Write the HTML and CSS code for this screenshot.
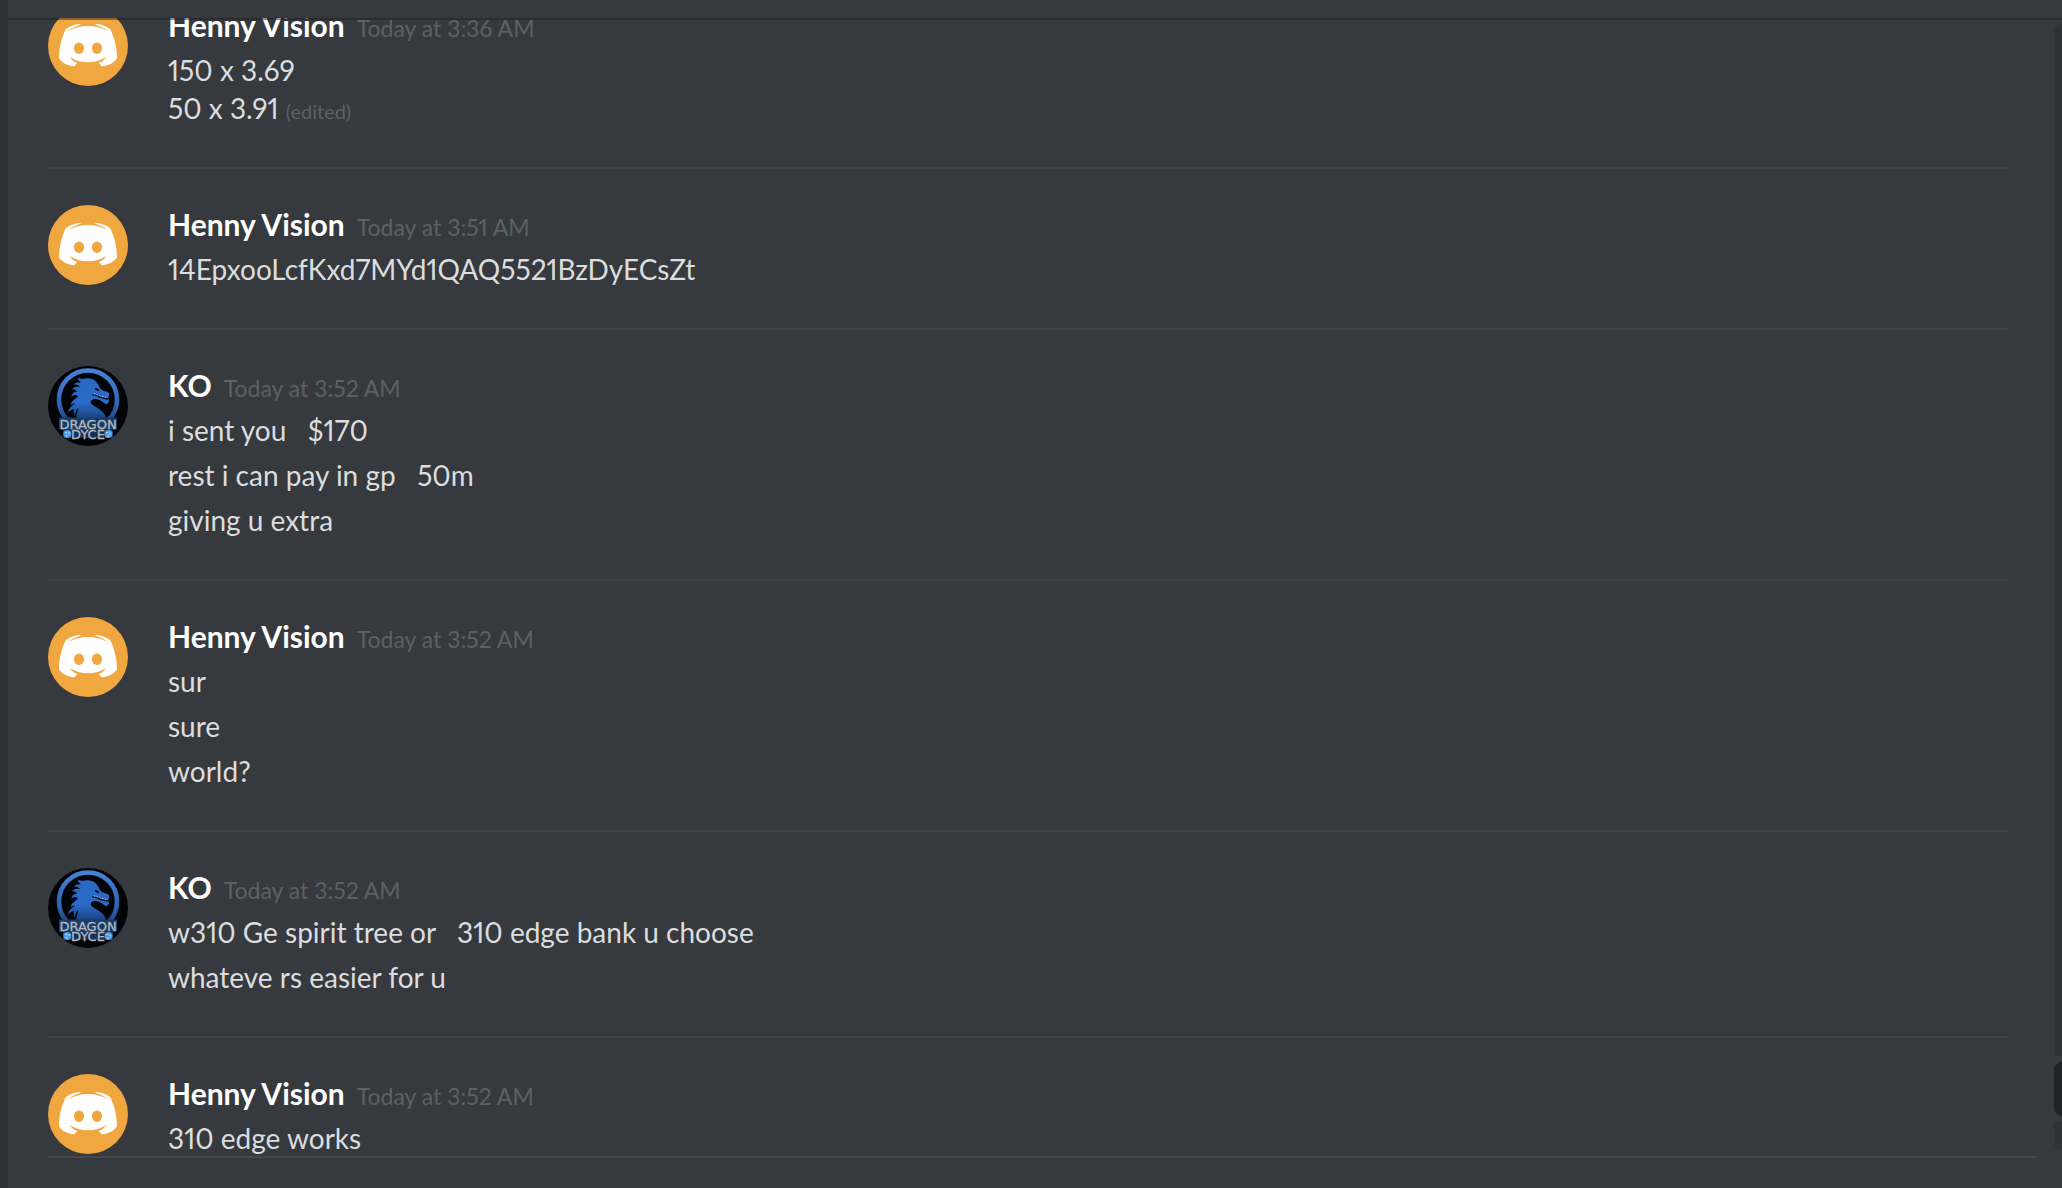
FILE: index.html
```html
<!DOCTYPE html>
<html lang="en">
<head>
<meta charset="utf-8">
<title>Direct messages</title>
<link rel="stylesheet" href="styles.css">
</head>
<body>
<svg class="symbols" aria-hidden="true">
  <defs>
    <linearGradient id="ring" x1="0" y1="0" x2="0" y2="1">
      <stop offset="0" stop-color="#4583d8"/>
      <stop offset="0.6" stop-color="#2f62ae"/>
      <stop offset="1" stop-color="#16345f"/>
    </linearGradient>
    <linearGradient id="scales" x1="0" y1="0" x2="0" y2="1">
      <stop offset="0" stop-color="#2a68c0"/>
      <stop offset="0.6" stop-color="#2b6cca"/>
      <stop offset="1" stop-color="#1a417c"/>
    </linearGradient>
    <symbol id="clyde" viewBox="0 0 80 80">
      <circle cx="40" cy="40" r="40" fill="#f0a740"/>
      <path fill="#fff" d="M33 18C27 18 22 20 17.7 23.3C13.5 32 11 42 11 52.3C14 57 20 60 26.3 60.3L29.3 57C26 56 23.5 54 22 51C27 54.5 33 56.3 40 56.3C47 56.3 53 54.5 58 51C56.5 54 54 56 50.7 57L53.7 60.3C60 60 66 57 69 52.3C69 42 66.5 32 62.3 23.3C58 20 53 18 47 18L48 19C53 20.5 57 22.5 59.5 25C53 21.5 47 20 40 20C33 20 27 21.5 20.5 25C23 22.5 27 20.5 32 19Z"/>
      <ellipse cx="31" cy="42.3" rx="5.1" ry="5.7" fill="#f0a740"/>
      <ellipse cx="49" cy="42.3" rx="5.1" ry="5.7" fill="#f0a740"/>
    </symbol>
    <symbol id="dragon" viewBox="0 0 80 80">
      <circle cx="40" cy="40" r="40" fill="#020407"/>
      <circle cx="40" cy="33.500" r="29" fill="none" stroke="url(#ring)" stroke-width="4.600"/>
      <path fill="url(#scales)" d="M29.500 11.500C34 14 37 11.500 42 12.500C47 13.500 49 16 51 20C52 22.500 53 23.500 56 25C59 25.500 61 26 61.500 28.500L60.500 31L61 36L58 38.500C55 36 52 33.500 48 33C44 33 42 35 43 37.500C46 41 54 43 57 49C58 51 57.500 52 57 53H29C27 50 30 47 30 42C28 44 27 47 27 50C25 47 25.500 45 26 43C23.500 43.500 22 44.500 20 46.500C20.500 42 24 40 27 37.500C25 37.500 24 38 22.500 39.500C23.500 34 28 33.500 30 30C27 28 25 29 23.500 31C24 27 26 26 29 25.500C27 23 25.500 23 24 23.500C26 20.500 29 21 32 20.500C29 18 27 18 26 19C27 15.500 31 17 33 16C31 15 30 13.500 29.500 11.500Z"/>
      <path fill="none" stroke="#020407" stroke-width="1.400" d="M44.500 29C48 28 50 31 53 31.500S58 33.500 60.500 32.500M47 22.500L51 24.500"/>
      <path fill="none" stroke="#b9cbe4" stroke-width="1" stroke-dasharray="1.300 1.500" d="M46 28C49 28 51 30 54 30.500S58 31.500 60 31"/>
      <rect x="11" y="51.500" width="58" height="12" fill="#183c69"/>
      <rect x="15" y="63" width="50" height="9" fill="#12315c"/>
      <text class="crest crest-top" x="40" y="62.500" text-anchor="middle">DRAGON</text>
      <text class="crest crest-bottom" x="40" y="72.500" text-anchor="middle">DYCE</text>
      <circle cx="19.300" cy="68" r="4" fill="#4b9be6"/>
      <circle cx="60.500" cy="68" r="4" fill="#4b9be6"/>
      <path stroke="#d6efff" stroke-width="1.400" stroke-linecap="round" d="M18 66.500h.1M21 67h.1M18.500 69.700h.1M59 66.500h.1M62 67.500h.1M60 70h.1"/>
    </symbol>
  </defs>
</svg>
<div class="app">
  <div class="sidebar-edge"></div>
  <main class="chat">
    <header class="topbar"></header>
    <div class="viewport">
      <div class="messages">
        <article class="group">
          <svg class="avatar"><use href="#clyde"/></svg>
          <div class="body">
            <h2 class="meta"><span class="name">Henny Vision</span><time class="time">Today at 3:36 AM</time></h2>
            <p class="text">150 x 3.69
50 x 3.91<span class="edited">(edited)</span></p>
          </div>
        </article>
        <article class="group">
          <svg class="avatar"><use href="#clyde"/></svg>
          <div class="body">
            <h2 class="meta"><span class="name">Henny Vision</span><time class="time">Today at 3:51 AM</time></h2>
            <p class="text">14EpxooLcfKxd7MYd1QAQ5521BzDyECsZt</p>
          </div>
        </article>
        <article class="group">
          <svg class="avatar"><use href="#dragon"/></svg>
          <div class="body">
            <h2 class="meta"><span class="name">KO</span><time class="time">Today at 3:52 AM</time></h2>
            <p class="text">i sent you   $170</p>
            <p class="text">rest i can pay in gp   50m</p>
            <p class="text">giving u extra</p>
          </div>
        </article>
        <article class="group">
          <svg class="avatar"><use href="#clyde"/></svg>
          <div class="body">
            <h2 class="meta"><span class="name">Henny Vision</span><time class="time">Today at 3:52 AM</time></h2>
            <p class="text">sur</p>
            <p class="text">sure</p>
            <p class="text">world?</p>
          </div>
        </article>
        <article class="group">
          <svg class="avatar"><use href="#dragon"/></svg>
          <div class="body">
            <h2 class="meta"><span class="name">KO</span><time class="time">Today at 3:52 AM</time></h2>
            <p class="text">w310 Ge spirit tree or   310 edge bank u choose</p>
            <p class="text">whateve rs easier for u</p>
          </div>
        </article>
        <article class="group">
          <svg class="avatar"><use href="#clyde"/></svg>
          <div class="body">
            <h2 class="meta"><span class="name">Henny Vision</span><time class="time">Today at 3:52 AM</time></h2>
            <p class="text">310 edge works</p>
          </div>
        </article>
      </div>
      <div class="scrollbar">
        <div class="track track-above"></div>
        <div class="thumb"></div>
        <div class="track track-below"></div>
      </div>
    </div>
    <footer class="composer"></footer>
  </main>
</div>
</body>
</html>
```
FILE: styles.css
```css
* {
  box-sizing: border-box;
}

body {
  margin: 0;
  background: #36393e;
  color: #dcddde;
  font-family: Lato, "Open Sans", sans-serif;
  font-variant-numeric: proportional-nums;
}

.symbols {
  position: absolute;
  width: 0;
  height: 0;
}

.app {
  display: flex;
  height: 100vh;
  overflow: hidden;
}

.sidebar-edge {
  flex: none;
  width: 8px;
  background: #313236;
}

.chat {
  flex: 1;
  min-width: 0;
  display: flex;
  flex-direction: column;
}

.topbar {
  flex: none;
  height: 18px;
}

.viewport {
  position: relative;
  flex: 1;
  min-height: 0;
  display: flex;
  overflow: hidden;
}

/* header shadow lies over the scrolled messages */
.viewport::before {
  content: "";
  position: absolute;
  inset: 0 0 auto 0;
  height: 2px;
  background: rgba(32, 32, 36, 0.5);
}

.messages {
  flex: 1;
  min-width: 0;
  display: flex;
  flex-direction: column;
  justify-content: flex-end;
  padding: 0 46px 0 40px;
}

.group {
  flex: none;
  display: flex;
  gap: 40px;
  padding: 36px 0 40px;
  border-bottom: 2px solid #3e4146;
}

.group:last-child {
  height: 118px;
  padding-bottom: 0;
  border-bottom: 0;
}

.avatar {
  flex: none;
  width: 80px;
  height: 80px;
}

.body {
  flex: 1;
  min-width: 0;
  display: flex;
  flex-direction: column;
  gap: 7px;
}

.meta {
  display: flex;
  align-items: baseline;
  gap: 12px;
  height: 38px;
  margin: 0;
}

.name {
  color: #fff;
  font-size: 30px;
  font-weight: 700;
  line-height: 38px;
}

.time {
  color: #5d6065;
  font-size: 23px;
  font-weight: 400;
  line-height: 28px;
}

.text {
  margin: 0;
  font-size: 28px;
  line-height: 38px;
  white-space: pre-wrap;
}

.edited {
  margin-left: 7px;
  color: #5d6065;
  font-size: 20px;
  line-height: 20px;
}

.scrollbar {
  flex: none;
  width: 8px;
  display: flex;
  flex-direction: column;
  gap: 6px;
  padding: 6px 0;
}

.track {
  background: #313236;
}

.track-above {
  flex: 1;
  border-radius: 8px 0 0 0;
}

.track-below {
  height: 28px;
  border-radius: 0 0 0 8px;
}

.thumb {
  height: 54px;
  border-radius: 8px 0 0 8px;
  background: #212224;
}

.composer {
  flex: none;
  height: 32px;
  margin: 0 26px 0 40px;
  border-top: 2px solid #45484d;
}

.crest {
  fill: #b4b8bd;
  stroke: #b4b8bd;
  stroke-width: 0.300;
  font-family: "DejaVu Sans", sans-serif;
}

.crest-top {
  font-size: 13px;
}

.crest-bottom {
  font-size: 13px;
}
```
